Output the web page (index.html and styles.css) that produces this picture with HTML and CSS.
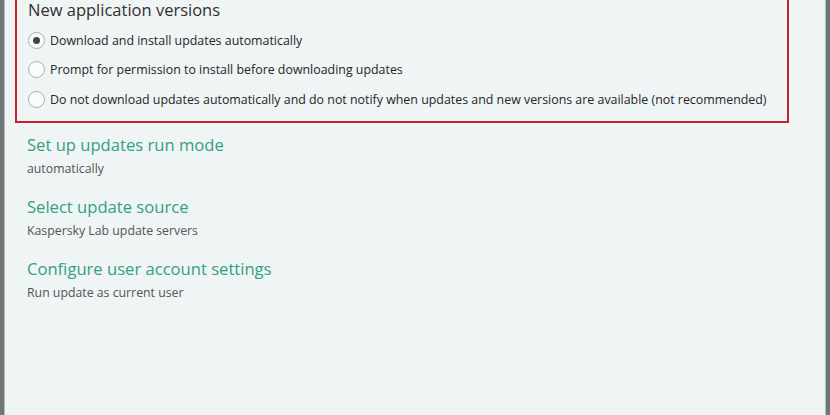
FILE: index.html
```html
<!DOCTYPE html>
<html>
<head>
<meta charset="utf-8">
<link rel="stylesheet" href="styles.css">
</head>
<body>
<div class="window">
  <div class="content">
    <div class="group">
      <div class="group-title">New application versions</div>
      <div class="options">
        <label class="option"><span class="radio checked"></span><span>Download and install updates automatically</span></label>
        <label class="option"><span class="radio"></span><span>Prompt for permission to install before downloading updates</span></label>
        <label class="option"><span class="radio"></span><span>Do not download updates automatically and do not notify when updates and new versions are available (not recommended)</span></label>
      </div>
    </div>
    <div class="links">
      <div class="item">
        <div class="link">Set up updates run mode</div>
        <div class="sub">automatically</div>
      </div>
      <div class="item">
        <div class="link">Select update source</div>
        <div class="sub">Kaspersky Lab update servers</div>
      </div>
      <div class="item">
        <div class="link">Configure user account settings</div>
        <div class="sub">Run update as current user</div>
      </div>
    </div>
  </div>
</div>
</body>
</html>
```

FILE: styles.css
```css
html, body {
  margin: 0;
  padding: 0;
  height: 100%;
  overflow: hidden;
}
body {
  font-family: "Open Sans", "Noto Sans", sans-serif;
  background: #eff4f4;
}
.window {
  height: 415px;
  border-left: 4px solid #6f7676;
  border-right: 4px solid #6f7676;
  box-shadow: inset 1px 0 0 #b5bcbc, inset -1px 0 0 #b5bcbc;
  background: #eff4f4;
  box-sizing: border-box;
}
.content {
  padding-left: 11px;
  padding-right: 37px;
}
.group {
  border: 2px solid #c9212b;
  border-top: none;
  padding: 0 0 12px 11px;
}
.group-title {
  font-size: 16.5px;
  color: #2f2f2f;
  line-height: 20px;
  margin-bottom: 10px;
}
.options {
  display: flex;
  flex-direction: column;
  gap: 9.5px;
}
.option {
  display: flex;
  align-items: center;
  gap: 5px;
  font-size: 12.4px;
  color: #262626;
  height: 20px;
}
.radio {
  width: 17px;
  height: 17px;
  border-radius: 50%;
  border: 1px solid #a9aeae;
  background: #fbfbfb;
  box-sizing: border-box;
  display: flex;
  align-items: center;
  justify-content: center;
  flex: none;
}
.radio.checked::after {
  content: "";
  width: 7px;
  height: 7px;
  border-radius: 50%;
  background: #3f4444;
}
.links {
  padding-left: 12px;
  padding-top: 11px;
  display: flex;
  flex-direction: column;
  gap: 19px;
}
.link {
  font-size: 16.6px;
  color: #33a085;
  line-height: 22px;
}
.sub {
  font-size: 12.3px;
  color: #555;
  line-height: 16px;
  margin-top: 5px;
}
```
